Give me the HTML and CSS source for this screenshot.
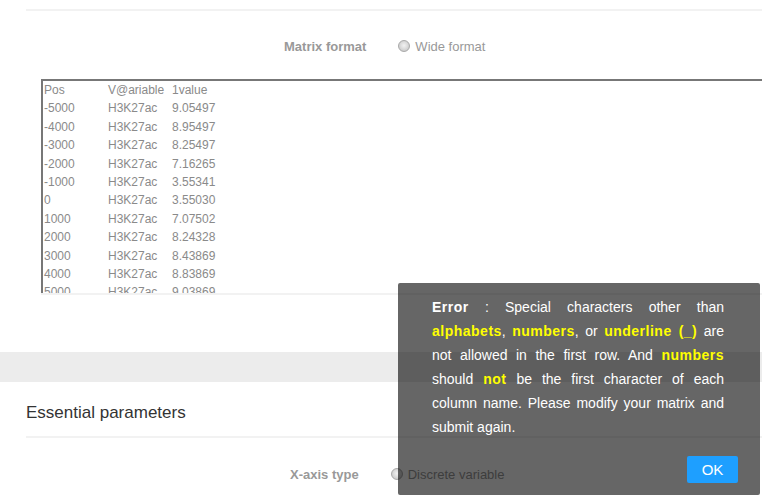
FILE: index.html
```html
<!DOCTYPE html>
<html>
<head>
<meta charset="utf-8">
<link rel="stylesheet" href="styles.css">
</head>
<body>
<div class="divider top-divider"></div>
<div class="form-row row-matrix">
  <span class="label">Matrix format</span>
  <span class="radio"></span>
  <span class="radio-text">Wide format</span>
</div>
<div class="matrix">
  <div class="r"><span>Pos</span><span>V@ariable</span><span>1value</span></div>
  <div class="r"><span>-5000</span><span>H3K27ac</span><span>9.05497</span></div>
  <div class="r"><span>-4000</span><span>H3K27ac</span><span>8.95497</span></div>
  <div class="r"><span>-3000</span><span>H3K27ac</span><span>8.25497</span></div>
  <div class="r"><span>-2000</span><span>H3K27ac</span><span>7.16265</span></div>
  <div class="r"><span>-1000</span><span>H3K27ac</span><span>3.55341</span></div>
  <div class="r"><span>0</span><span>H3K27ac</span><span>3.55030</span></div>
  <div class="r"><span>1000</span><span>H3K27ac</span><span>7.07502</span></div>
  <div class="r"><span>2000</span><span>H3K27ac</span><span>8.24328</span></div>
  <div class="r"><span>3000</span><span>H3K27ac</span><span>8.43869</span></div>
  <div class="r"><span>4000</span><span>H3K27ac</span><span>8.83869</span></div>
  <div class="r"><span>5000</span><span>H3K27ac</span><span>9.03869</span></div>
</div>
<div class="matrix-line"></div>
<div class="band"></div>
<h2 class="section-title">Essential parameters</h2>
<div class="divider section-divider"></div>
<div class="form-row row-xaxis">
  <span class="label">X-axis type</span>
  <span class="radio"></span>
  <span class="radio-text">Discrete variable</span>
</div>

<div class="dialog">
  <div class="dialog-content">
    <b class="em">Error</b> : Special characters other than <b class="em hl">alphabets</b>, <b class="em hl">numbers</b>, or <b class="em hl">underline (_)</b> are not allowed in the first row. And <b class="em hl">numbers</b> should <b class="em hl">not</b> be the first character of each column name. Please modify your matrix and submit again.
  </div>
  <div class="dialog-btns">
    <span class="btn-ok">OK</span>
  </div>
</div>
</body>
</html>
```

FILE: styles.css
```css
html, body {
  margin: 0;
  padding: 0;
}
body {
  width: 762px;
  height: 500px;
  overflow: hidden;
  position: relative;
  background: #fff;
  font-family: "Liberation Sans", Arial, sans-serif;
}
.divider {
  height: 2px;
  background: #f2f2f2;
  margin-left: 26px;
}
.top-divider {
  margin-top: 9px;
}
.form-row {
  display: flex;
  align-items: center;
  height: 18px;
  font-size: 13px;
}
.form-row .label {
  font-weight: bold;
  color: #999;
  margin-right: 32px;
}
.row-matrix {
  margin-top: 26px;
  padding-left: 284px;
}
.row-xaxis {
  margin-top: 27px;
  padding-left: 290px;
}
.radio {
  width: 12px;
  height: 12px;
  box-sizing: border-box;
  border-radius: 50%;
  border: 1px solid #a9a9a9;
  background: radial-gradient(circle at 50% 45%, #f2f2f2 0, #dcdcdc 45%, #bdbdbd 100%);
  margin-right: 5px;
}
.radio-text {
  color: #999;
}
.matrix {
  margin-top: 24px;
  margin-left: 41px;
  height: 212px;
  border-top: 2px solid #777;
  border-left: 2px solid #777;
  padding-left: 1px;
  overflow: hidden;
  font-size: 12px;
  line-height: 18.4px;
  color: #8a8a8a;
}
.r {
  display: grid;
  grid-template-columns: 64px 64px auto;
  white-space: nowrap;
}
.matrix-line {
  margin-left: 41px;
  height: 2px;
  background: #f2f2f2;
}
.band {
  margin-top: 57px;
  height: 30px;
  background: #ececec;
}
.section-title {
  margin: 19px 0 0 0;
  padding-left: 26px;
  font-size: 17px;
  font-weight: normal;
  line-height: 24px;
  color: #333;
}
.section-divider {
  margin-top: 11px;
}
.dialog {
  position: absolute;
  left: 398px;
  top: 283px;
  width: 362px;
  height: 212px;
  box-sizing: border-box;
  background: rgba(0, 0, 0, 0.6);
  border-radius: 2px;
  padding: 12px 0 0 0;
}
.dialog-content {
  padding: 0 36px 0 34px;
  font-size: 14px;
  line-height: 24px;
  color: #fff;
  text-align: justify;
}
.dialog-content .em {
  letter-spacing: 0.5px;
}
.dialog-content .hl {
  color: #ffff00;
}
.dialog-btns {
  display: flex;
  justify-content: flex-end;
  margin-top: 17px;
  padding-right: 22px;
}
.btn-ok {
  width: 51px;
  height: 27px;
  line-height: 27px;
  text-align: center;
  background: #1e9fff;
  color: #fff;
  font-size: 15px;
  border-radius: 2px;
}
```
